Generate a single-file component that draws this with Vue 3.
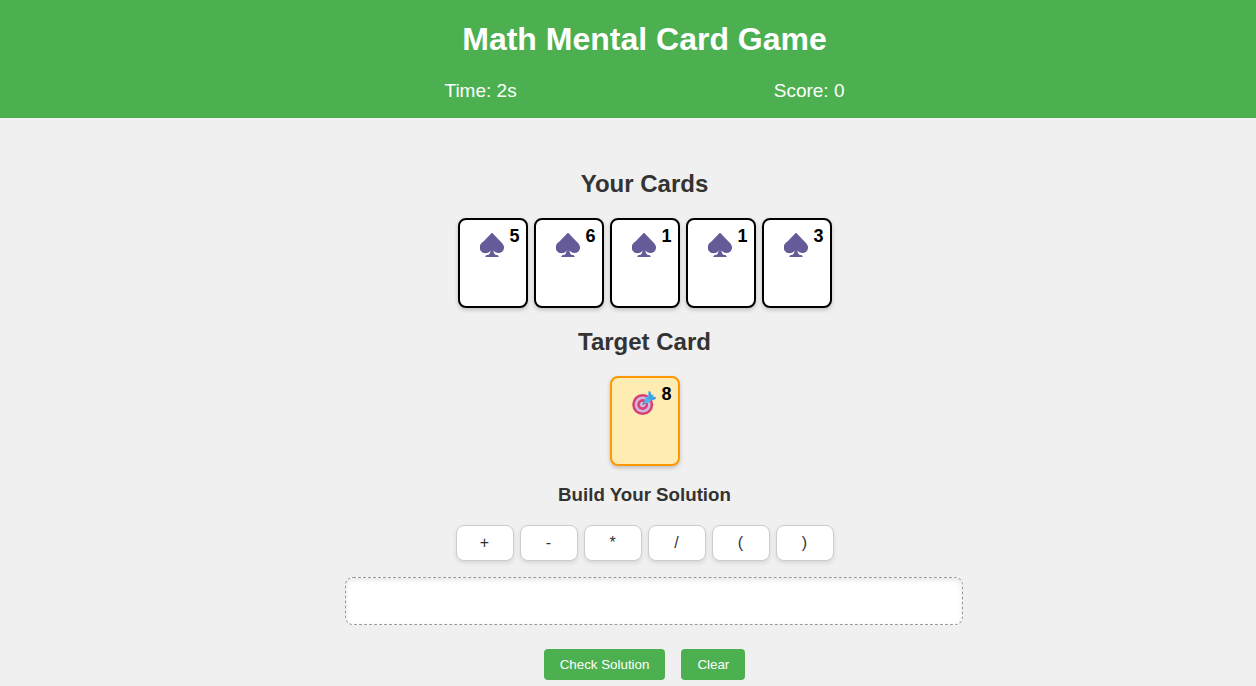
<script setup>
import { ref, computed } from 'vue'

const time = ref(2)
const score = ref(0)
const cards = ref([5, 6, 1, 1, 3])
const target = ref(8)
const operators = ['+', '-', '*', '/', '(', ')']
const tokens = ref([])
const solution = computed(() => tokens.value.join(' '))

function add(token) {
  tokens.value.push(token)
}

function check() {
  if (solution.value) score.value += 1
}

function clear() {
  tokens.value = []
}
</script>

<template>
  <div class="page">
    <header class="top">
      <h1>Math Mental Card Game</h1>
      <div class="stats">
        <span>Time: {{ time }}s</span>
        <span>Score: {{ score }}</span>
      </div>
    </header>

    <main class="game">
      <h2>Your Cards</h2>
      <div class="row">
        <button v-for="(card, i) in cards" :key="i" type="button" class="card" @click="add(card)">
          <svg class="symbol" viewBox="0 0 24 24" aria-hidden="true">
            <path
              fill="#655b98"
              d="M13 0.500C14.500 2.500 18 5.800 21.300 9.200C23.500 11.400 24.200 13.200 24 15.200C23.600 18.200 21.300 20 18.500 20C16.500 20 14.600 19 13.500 17.200C13.600 20 14.600 21.800 16.700 22.100C18 22.300 18.600 22.700 18.600 24H5.400C5.400 22.700 6 22.300 7.300 22.100C9.400 21.800 10.400 20 10.500 17.200C9.400 19 7.500 20 5.500 20C2.700 20 0.400 18.200 0 15.200C-0.200 13.200 0.500 11.400 2.700 9.200C6 5.800 9.500 2.500 11 0.500Q12 -0.500 13 0.500Z"
            />
            <path
              d="M2.700 9.200C0.500 11.400 -0.200 13.200 0.300 15.500C1 18.500 3 19.700 5.500 19.700C7.500 19.700 9.200 18.900 10.200 17.600"
              fill="none"
              stroke="#534882"
              stroke-width="0.700"
            />
          </svg>
          <span class="value">{{ card }}</span>
        </button>
      </div>

      <h2>Target Card</h2>
      <div class="row">
        <div class="card target">
          <svg class="symbol" viewBox="0 0 24 24" aria-hidden="true">
            <circle cx="10.700" cy="13.500" r="10.500" fill="#d83d73" />
            <circle cx="10.700" cy="13.500" r="8" fill="#cfb9de" />
            <circle cx="10.700" cy="13.500" r="5.400" fill="#dc3f73" />
            <circle cx="10.700" cy="13.500" r="2.800" fill="#cbb9df" />
            <path d="M10.700 13.500L16 8.400" stroke="#5c6377" stroke-width="1.300" />
            <path
              d="M12.200 11.500L12.800 7.800L16.200 4.500L16.700 0.300L18 0.500L19.700 4.200L21.500 3.200L21 5.400L24 6.500L23.500 8L19.300 9.300L16.500 12L12.600 12.400Z"
              fill="#50b5ee"
            />
            <path
              d="M16.700 0.300L18 0.500L19.700 4.200L17 6.800ZM21 5.400L24 6.500L23.500 8L19.300 9.300L18.300 8.300Z"
              fill="#3d9ee8"
            />
            <path d="M16 8.400L20.500 4.300" stroke="#2986d7" stroke-width="0.800" />
          </svg>
          <span class="value">{{ target }}</span>
        </div>
      </div>

      <h3>Build Your Solution</h3>
      <div class="row">
        <button v-for="op in operators" :key="op" type="button" class="operator" @click="add(op)">
          {{ op }}
        </button>
      </div>

      <div class="solution" aria-label="Solution" aria-live="polite">{{ solution }}</div>

      <div class="actions">
        <button type="button" class="action" @click="check">Check Solution</button>
        <button type="button" class="action" @click="clear">Clear</button>
      </div>
    </main>
  </div>
</template>

<style>
body {
  margin: 0;
  background: #f0f0f0;
}
</style>

<style scoped>
.page {
  font-family: "Liberation Sans", Arial, sans-serif;
  color: #333;
}

.page button {
  font-family: inherit;
  cursor: pointer;
}

.top {
  padding: 20px 0 16px 33px;
  background: #4caf50;
  color: #fff;
}

h1 {
  margin: 0;
  font-size: 32px;
  line-height: 38px;
  text-align: center;
}

.stats {
  display: flex;
  justify-content: space-between;
  max-width: 400px;
  margin: 22px auto 0;
  font-size: 19px;
  line-height: 22px;
}

.game {
  display: flex;
  flex-direction: column;
  align-items: center;
  padding: 32px 0 6px 33px;
}

h2 {
  margin: 20px 0;
  font-size: 24px;
  line-height: 28px;
}

h3 {
  margin: 18px 0 20px;
  line-height: 21px;
}

.row {
  display: flex;
  justify-content: center;
  gap: 6px;
}

.card {
  position: relative;
  box-sizing: border-box;
  display: flex;
  justify-content: center;
  align-items: flex-start;
  width: 70px;
  height: 90px;
  padding: 13px 2px 0 0;
  border: 2px solid #000;
  border-radius: 8px;
  background: #fff;
  color: #000;
  box-shadow: 0 2px 4px rgba(0, 0, 0, 0.2);
}

.card.target {
  border-color: #ff9800;
  background: #ffecb3;
}

.symbol {
  width: 24px;
  height: 24px;
}

.value {
  position: absolute;
  top: 6px;
  right: 6px;
  font-size: 18px;
  line-height: 20px;
  font-weight: bold;
}

.operator {
  width: 58px;
  height: 36px;
  padding: 0;
  border: 1px solid #ccc;
  border-radius: 8px;
  background: #fff;
  color: #333;
  font-size: 16px;
  box-shadow: 0 2px 4px rgba(0, 0, 0, 0.1);
}

.solution {
  box-sizing: border-box;
  width: calc(100% - 32px);
  max-width: 618px;
  min-height: 48px;
  margin: 16px 0 24px 18px;
  padding: 8px;
  border: 1px dashed #999;
  border-radius: 8px;
  background: #fff;
  font-size: 18px;
  line-height: 30px;
  box-shadow: inset 0 2px 5px rgba(0, 0, 0, 0.1);
}

.actions {
  display: flex;
  gap: 16px;
}

.action {
  padding: 8px 16px;
  border: 0;
  border-radius: 4px;
  background: #4caf50;
  color: #fff;
}
</style>
